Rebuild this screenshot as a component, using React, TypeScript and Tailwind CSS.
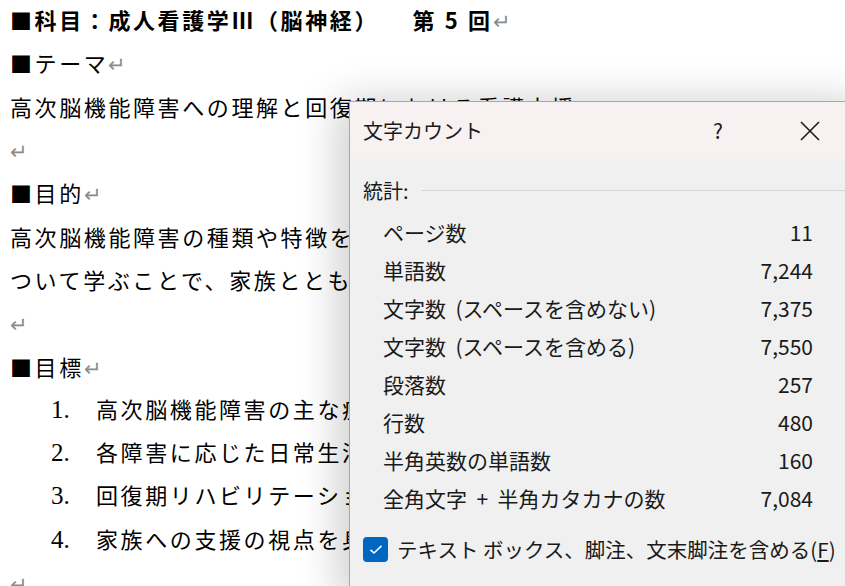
import React from 'react';

const docFont = { fontFamily: '"Noto Sans CJK JP", "Liberation Serif", serif' };
const numFont = { fontFamily: '"Liberation Serif", serif' };
const uiFont = { fontFamily: '"Noto Sans CJK JP", "Noto Sans", sans-serif' };

function Ret() {
  return <span className="text-[#8c8c8c] text-[21px] tracking-normal font-normal">↵</span>;
}

function Line({ children, className = '' }: { children?: React.ReactNode; className?: string }) {
  return (
    <div className={`h-[43.3px] flex items-center ${className}`}>
      <span>{children}</span>
    </div>
  );
}

const goals = [
  '高次脳機能障害の主な症状と評価方法を理解する',
  '各障害に応じた日常生活援助の方法を学ぶ',
  '回復期リハビリテーションにおける看護師の役割を理解する',
  '家族への支援の視点を身につける',
];

const stats: [string, string][] = [
  ['ページ数', '11'],
  ['単語数', '7,244'],
  ['文字数\u00a0 (スペースを含めない)', '7,375'],
  ['文字数\u00a0 (スペースを含める)', '7,550'],
  ['段落数', '257'],
  ['行数', '480'],
  ['半角英数の単語数', '160'],
  ['全角文字\u00a0 +\u00a0 半角カタカナの数', '7,084'],
];

function WordCountDialog() {
  return (
    <div
      className="absolute left-[349px] top-[101px] w-[520px] h-[500px] bg-[#f0f0f0] border-l border-t border-[#a8a8a8] shadow-[-10px_0_40px_rgba(0,0,0,0.2)] text-[#1a1a1a]"
      style={uiFont}
    >
      {/* タイトルバー */}
      <div className="h-[57px] bg-[#f8f1f2] flex items-center pl-[13px]">
        <span className="text-[20px] leading-none">文字カウント</span>
        <span className="ml-[230px] text-[21px] leading-none">?</span>
        <svg className="ml-[76px]" width="22" height="22" viewBox="0 0 22 22">
          <path d="M2 2 L20 20 M20 2 L2 20" stroke="#1a1a1a" strokeWidth="1.6" />
        </svg>
      </div>

      <div className="pl-[13px] pt-[15px]">
        <div className="flex items-center h-[34px]">
          <span className="text-[20px] leading-none">統計:</span>
          <div className="flex-1 ml-[12px] mt-[-2px] h-px bg-[#d6d6d6]" />
        </div>
        <div className="pl-[20px] w-[450px] mt-[5px]">
          {stats.map(([label, value]) => (
            <div key={label} className="flex justify-between items-center h-[38.1px] text-[21px] leading-none">
              <span>{label}</span>
              <span>{value}</span>
            </div>
          ))}
        </div>
        <div className="flex items-center mt-[19px]">
          <div className="w-[25px] h-[25px] rounded-[4px] bg-[#0067c0] flex items-center justify-center">
            <svg width="14" height="11" viewBox="0 0 14 11">
              <path d="M1.5 5.8 L5 9 L12.5 1.8" fill="none" stroke="white" strokeWidth="1.6" />
            </svg>
          </div>
          <span className="ml-[9px] text-[20.5px] leading-none">
            テキスト ボックス、脚注、文末脚注を含める(<span className="underline underline-offset-2">F</span>)
          </span>
        </div>
      </div>
    </div>
  );
}

export default function App() {
  return (
    <div className="relative w-[845px] h-[586px] bg-white overflow-hidden">
      <div
        className="pl-[10px] -mt-[2px] text-[22px] leading-none tracking-[2.6px] text-black whitespace-nowrap"
        style={docFont}
      >
        <Line className="font-bold">■科目：成人看護学Ⅲ（脳神経）　<span className="ml-[20px]">第 5 回</span><Ret /></Line>
        <Line>■テーマ<Ret /></Line>
        <Line>高次脳機能障害への理解と回復期における看護支援<Ret /></Line>
        <Line><Ret /></Line>
        <Line>■目的<Ret /></Line>
        <Line>高次脳機能障害の種類や特徴を理解し、回復期における看護の役割に</Line>
        <Line>ついて学ぶことで、家族とともに生活を再構築する支援を考える。<Ret /></Line>
        <Line><Ret /></Line>
        <Line>■目標<Ret /></Line>
        {goals.map((g, i) => (
          <Line key={i}>
            <span className="inline-block w-[86px] pl-[41px] text-[25px] tracking-normal" style={numFont}>{i + 1}.</span>
            {g}<Ret />
          </Line>
        ))}
        <Line><Ret /></Line>
      </div>
      <WordCountDialog />
    </div>
  );
}
